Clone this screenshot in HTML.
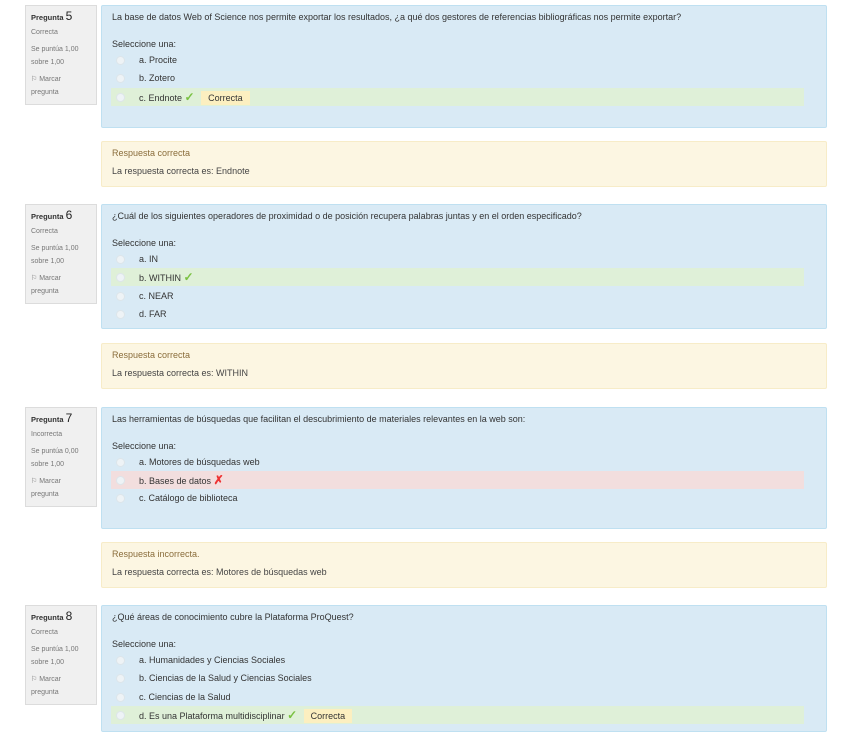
<!DOCTYPE html><html><head><meta charset="utf-8"><style>
body{margin:0;width:848px;height:739px;background:#fff;font-family:"Liberation Sans",sans-serif;position:relative;overflow:hidden}
.q{position:absolute;left:0;width:848px}
.info{position:absolute;left:25px;top:0;width:72px;height:100px;background:#f0f0f0;border:1px solid #dcdcdc;box-sizing:border-box;padding:3px 5px;font-size:7px;color:#777}
.info b{color:#333;font-size:7.5px}
.info b span{font-size:12px;font-weight:normal;color:#222}
.info p{margin:0}
.content{position:absolute;left:101px;top:0;width:726px;background:#d9eaf5;border:1px solid #bfe0f1;box-sizing:border-box;border-radius:2px;font-size:9px;color:#333}
.qt{position:absolute;left:10px;top:6px}
.sel{position:absolute;left:10px;top:33px}
.opt{position:absolute;left:9px;width:693px;height:18px;line-height:18px}
.opt.ok{background:#dff0d8}.opt.bad{background:#f2dede}
.rad{position:absolute;left:5px;top:5px;width:7px;height:7px;border-radius:50%;background:#eef3f6;border:1px solid #dde5ea}
.opt .t{position:absolute;left:28px}
.tag{background:#fcefc0;padding:2px 7px;margin-left:4px}
.chk{color:#7ac142;font-weight:bold;font-size:12px}
.x{color:#e33;font-weight:bold;font-size:12px}
.fb{position:absolute;left:101px;width:726px;height:46px;background:#fcf6e2;border:1px solid #f7ecc8;box-sizing:border-box;border-radius:2px;font-size:9px;color:#8a6d3b}
.fb div{position:absolute;left:10px}
</style></head><body>

<div class="q" style="top:5px">
<div class="info"><b>Pregunta <span>5</span></b><p style="margin-top:6px">Correcta</p><p style="margin-top:7px;line-height:13px">Se puntúa 1,00<br>sobre 1,00</p><p style="margin-top:4px;line-height:13px">⚐ Marcar<br>pregunta</p></div>
<div class="content" style="height:123px">
<div class="qt">La base de datos Web of Science nos permite exportar los resultados, ¿a qué dos gestores de referencias bibliográficas nos permite exportar?</div>
<div class="sel">Seleccione una:</div>
<div class="opt" style="top:45px"><i class="rad"></i><span class="t">a. Procite</span></div>
<div class="opt" style="top:63px"><i class="rad"></i><span class="t">b. Zotero</span></div>
<div class="opt ok" style="top:82px"><i class="rad"></i><span class="t">c. Endnote <span class="chk">✓</span> <span class="tag">Correcta</span></span></div>
</div>
<div class="fb" style="top:136px"><div style="top:6px">Respuesta correcta</div><div style="top:24px;color:#444">La respuesta correcta es: Endnote</div></div>
</div>

<div class="q" style="top:204px">
<div class="info"><b>Pregunta <span>6</span></b><p style="margin-top:6px">Correcta</p><p style="margin-top:7px;line-height:13px">Se puntúa 1,00<br>sobre 1,00</p><p style="margin-top:4px;line-height:13px">⚐ Marcar<br>pregunta</p></div>
<div class="content" style="height:125px">
<div class="qt">¿Cuál de los siguientes operadores de proximidad o de posición recupera palabras juntas y en el orden especificado?</div>
<div class="sel">Seleccione una:</div>
<div class="opt" style="top:45px"><i class="rad"></i><span class="t">a. IN</span></div>
<div class="opt ok" style="top:63px"><i class="rad"></i><span class="t">b. WITHIN <span class="chk">✓</span></span></div>
<div class="opt" style="top:82px"><i class="rad"></i><span class="t">c. NEAR</span></div>
<div class="opt" style="top:100px"><i class="rad"></i><span class="t">d. FAR</span></div>
</div>
<div class="fb" style="top:139px"><div style="top:6px">Respuesta correcta</div><div style="top:24px;color:#444">La respuesta correcta es: WITHIN</div></div>
</div>

<div class="q" style="top:407px">
<div class="info"><b>Pregunta <span>7</span></b><p style="margin-top:6px">Incorrecta</p><p style="margin-top:7px;line-height:13px">Se puntúa 0,00<br>sobre 1,00</p><p style="margin-top:4px;line-height:13px">⚐ Marcar<br>pregunta</p></div>
<div class="content" style="height:122px">
<div class="qt">Las herramientas de búsquedas que facilitan el descubrimiento de materiales relevantes en la web son:</div>
<div class="sel">Seleccione una:</div>
<div class="opt" style="top:45px"><i class="rad"></i><span class="t">a. Motores de búsquedas web</span></div>
<div class="opt bad" style="top:63px"><i class="rad"></i><span class="t">b. Bases de datos <span class="x">✗</span></span></div>
<div class="opt" style="top:81px"><i class="rad"></i><span class="t">c. Catálogo de biblioteca</span></div>
</div>
<div class="fb" style="top:135px"><div style="top:6px">Respuesta incorrecta.</div><div style="top:24px;color:#444">La respuesta correcta es: Motores de búsquedas web</div></div>
</div>

<div class="q" style="top:605px">
<div class="info"><b>Pregunta <span>8</span></b><p style="margin-top:6px">Correcta</p><p style="margin-top:7px;line-height:13px">Se puntúa 1,00<br>sobre 1,00</p><p style="margin-top:4px;line-height:13px">⚐ Marcar<br>pregunta</p></div>
<div class="content" style="height:127px">
<div class="qt">¿Qué áreas de conocimiento cubre la Plataforma ProQuest?</div>
<div class="sel">Seleccione una:</div>
<div class="opt" style="top:45px"><i class="rad"></i><span class="t">a. Humanidades y Ciencias Sociales</span></div>
<div class="opt" style="top:63px"><i class="rad"></i><span class="t">b. Ciencias de la Salud y Ciencias Sociales</span></div>
<div class="opt" style="top:82px"><i class="rad"></i><span class="t">c. Ciencias de la Salud</span></div>
<div class="opt ok" style="top:100px"><i class="rad"></i><span class="t">d. Es una Plataforma multidisciplinar <span class="chk">✓</span> <span class="tag">Correcta</span></span></div>
</div>
</div>
</body></html>
